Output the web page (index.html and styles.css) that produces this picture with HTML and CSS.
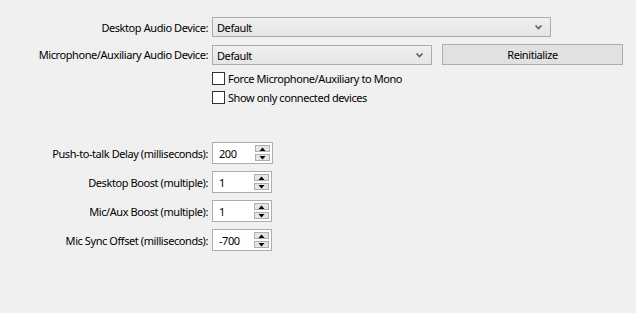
FILE: index.html
```html
<!DOCTYPE html>
<html>
<head>
<meta charset="utf-8">
<link rel="stylesheet" href="styles.css">
</head>
<body>
<div class="page">
  <div class="form top">
    <div class="label">Desktop Audio Device:</div>
    <div class="field">
      <div class="combo combo-wide"><span>Default</span><svg class="chev" width="9" height="6" viewBox="0 0 9 6"><path d="M1.5 1.5 L4.5 4.5 L7.5 1.5" fill="none" stroke="#606060" stroke-width="1.7"/></svg></div>
    </div>
    <div class="label">Microphone/Auxiliary Audio Device:</div>
    <div class="field row2">
      <div class="combo combo-mic"><span>Default</span><svg class="chev" width="9" height="6" viewBox="0 0 9 6"><path d="M1.5 1.5 L4.5 4.5 L7.5 1.5" fill="none" stroke="#606060" stroke-width="1.7"/></svg></div>
      <div class="button">Reinitialize</div>
    </div>
    <div class="label"></div>
    <div class="field check-row"><span class="box"></span><span>Force Microphone/Auxiliary to Mono</span></div>
    <div class="label"></div>
    <div class="field check-row second"><span class="box"></span><span>Show only connected devices</span></div>
  </div>

  <div class="form bottom">
    <div class="label">Push-to-talk Delay (milliseconds):</div>
    <div class="field"><div class="spin spin-first"><span class="val">200</span><div class="arrows"><span class="ab"><svg width="7" height="4" viewBox="0 0 7 4"><path d="M0.5 4 L3.5 0.5 L6.5 4Z" fill="#000"/></svg></span><span class="ab"><svg width="7" height="4" viewBox="0 0 7 4"><path d="M0.5 0 L3.5 3.5 L6.5 0Z" fill="#000"/></svg></span></div></div></div>
    <div class="label">Desktop Boost (multiple):</div>
    <div class="field"><div class="spin"><span class="val">1</span><div class="arrows"><span class="ab"><svg width="7" height="4" viewBox="0 0 7 4"><path d="M0.5 4 L3.5 0.5 L6.5 4Z" fill="#000"/></svg></span><span class="ab"><svg width="7" height="4" viewBox="0 0 7 4"><path d="M0.5 0 L3.5 3.5 L6.5 0Z" fill="#000"/></svg></span></div></div></div>
    <div class="label">Mic/Aux Boost (multiple):</div>
    <div class="field"><div class="spin"><span class="val">1</span><div class="arrows"><span class="ab"><svg width="7" height="4" viewBox="0 0 7 4"><path d="M0.5 4 L3.5 0.5 L6.5 4Z" fill="#000"/></svg></span><span class="ab"><svg width="7" height="4" viewBox="0 0 7 4"><path d="M0.5 0 L3.5 3.5 L6.5 0Z" fill="#000"/></svg></span></div></div></div>
    <div class="label">Mic Sync Offset (milliseconds):</div>
    <div class="field"><div class="spin"><span class="val">-700</span><div class="arrows"><span class="ab"><svg width="7" height="4" viewBox="0 0 7 4"><path d="M0.5 4 L3.5 0.5 L6.5 4Z" fill="#000"/></svg></span><span class="ab"><svg width="7" height="4" viewBox="0 0 7 4"><path d="M0.5 0 L3.5 3.5 L6.5 0Z" fill="#000"/></svg></span></div></div></div>
  </div>
</div>
</body>
</html>
```

FILE: styles.css
```css
html, body {
  margin: 0;
  padding: 0;
  background: #f0f0f0;
}
body {
  width: 636px;
  height: 313px;
  overflow: hidden;
  font-family: "Noto Sans", "Open Sans", sans-serif;
  font-size: 11px;
  letter-spacing: -0.42px;
  color: #000;
}
.page {
  padding-top: 17px;
}
.form {
  display: grid;
  grid-template-columns: 208px 1fr;
  column-gap: 4px;
  align-items: center;
}
.top {
  row-gap: 7px;
}
.bottom {
  margin-top: 38px;
  row-gap: 7px;
}
.label {
  text-align: right;
  white-space: nowrap;
}
.field {
  display: flex;
  align-items: center;
}
.row2 {
  align-items: flex-end;
}
.combo {
  box-sizing: border-box;
  height: 20px;
  border: 1px solid #acacac;
  background: linear-gradient(#f0f0f0, #e5e5e5);
  display: flex;
  align-items: center;
  justify-content: space-between;
  padding: 0 7px 0 4px;
}
.combo-wide { width: 339px; }
.combo-mic { width: 220px; }
.chev { display: block; }
.button {
  box-sizing: border-box;
  margin-left: 10px;
  width: 181px;
  height: 21px;
  border: 1px solid #adadad;
  background: #e1e1e1;
  display: flex;
  align-items: center;
  justify-content: center;
}
.check-row {
  height: 13px;
  gap: 3px;
}
.check-row.second {
  margin-top: -1px;
}
.box {
  box-sizing: border-box;
  width: 13px;
  height: 13px;
  border: 1px solid #333;
  background: #fff;
}
.spin {
  box-sizing: border-box;
  width: 60px;
  height: 22px;
  border: 1px solid #abadb3;
  background: #fff;
  display: flex;
  align-items: center;
  justify-content: space-between;
  padding: 0 2px 0 6px;
}
.spin-first { width: 61px; }
.arrows {
  display: flex;
  flex-direction: column;
  gap: 2px;
}
.ab {
  box-sizing: border-box;
  width: 15px;
  height: 7px;
  border: 1px solid #adadad;
  background: #e5e5e5;
  display: flex;
  align-items: center;
  justify-content: center;
}
.ab svg { display: block; }
```
